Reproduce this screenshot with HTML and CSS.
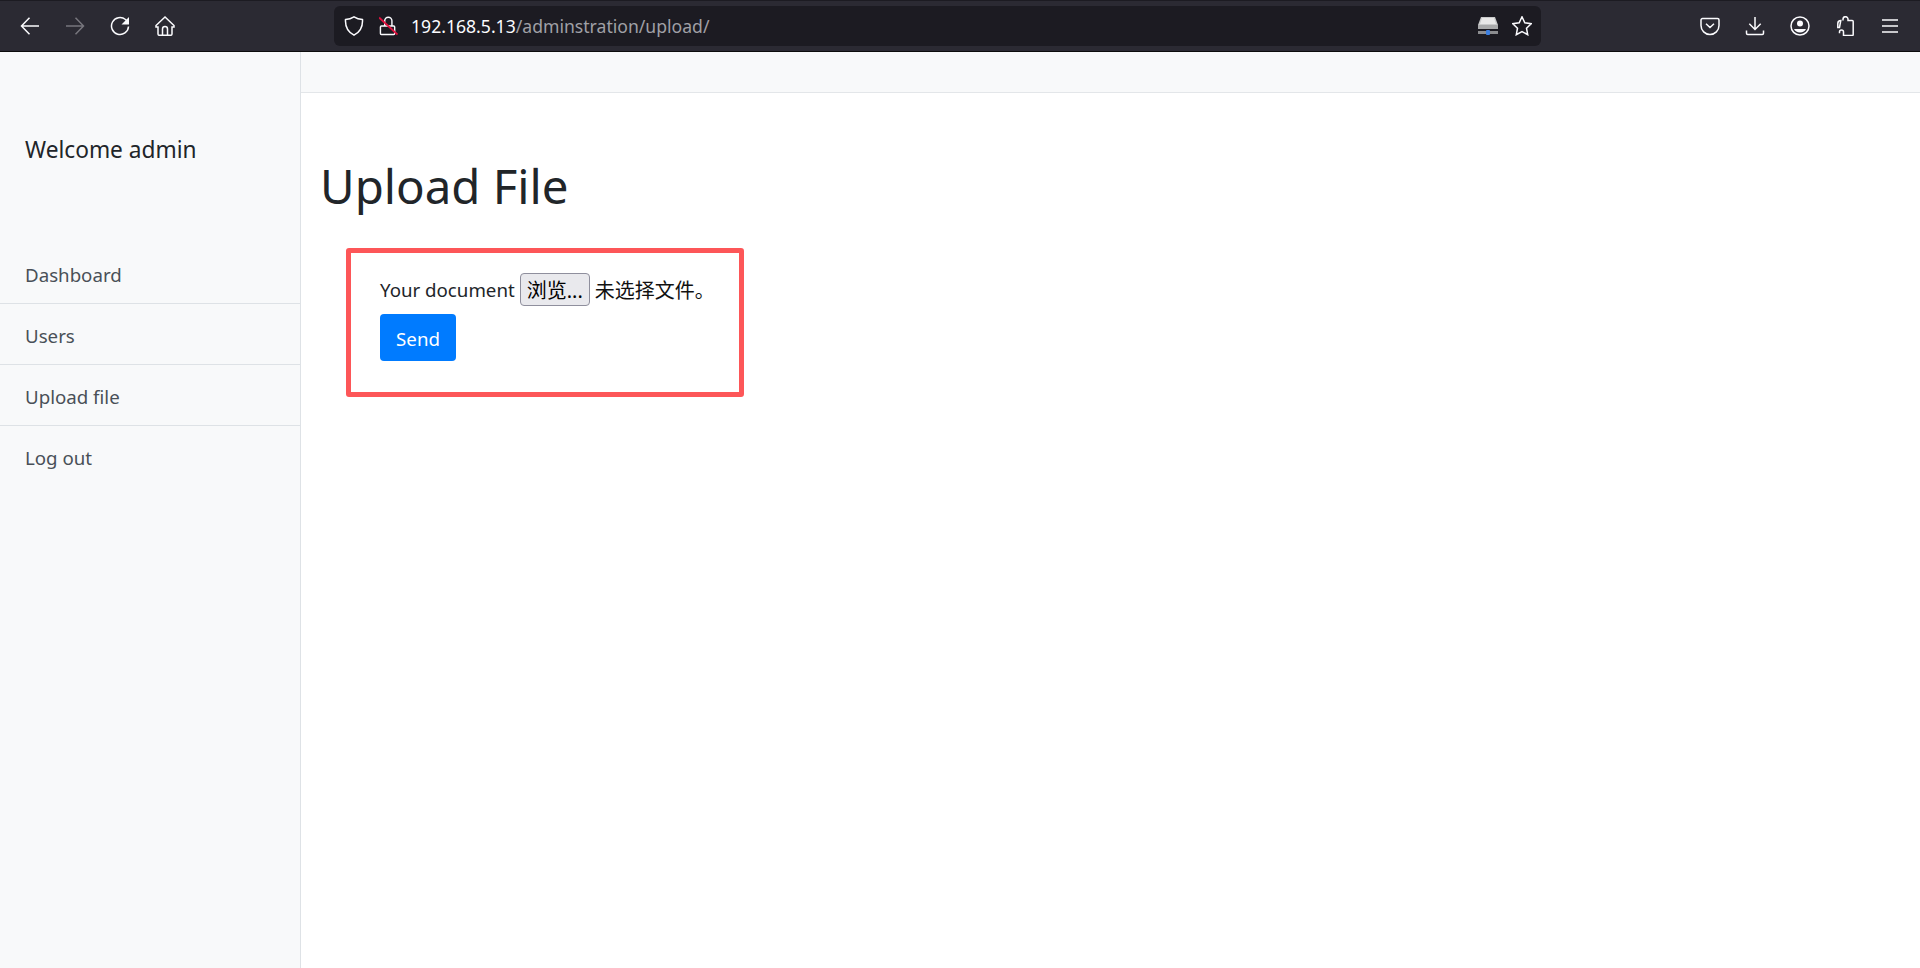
FILE: index.html
```html
<!DOCTYPE html>
<html lang="zh-CN">
<head>
<meta charset="utf-8">
<title>Upload File</title>
<link rel="stylesheet" href="styles.css">
</head>
<body>
<header class="toolbar">
  <div class="tool-group nav-tools">
    <svg class="icon" viewBox="0 0 20 20"><path d="M19 10H1.500M9.500 1.800 1.500 10l8 8.200"/></svg>
    <svg class="icon dim" viewBox="0 0 20 20"><path d="M1 10H18.500M10.500 1.800 18.500 10l-8 8.200"/></svg>
    <svg class="icon" viewBox="0 0 20 20"><path d="M18.500 10.500A8.500 8.500 0 1 1 15.500 3.500l2 2"/><path class="solid" d="M19 1v7.500h-7.500z"/></svg>
    <svg class="icon" viewBox="0 0 20 20"><path d="M10 1 1 9.500v1.500h2v7a1.300 1.300 0 0 0 1.300 1.300h11.400a1.300 1.300 0 0 0 1.300-1.300v-7h2V9.500zM7.500 19v-6a2.500 2.500 0 0 1 5 0v6"/></svg>
  </div>
  <div class="urlbar">
    <svg class="icon shield" viewBox="0 0 20 20"><path d="M10 .8c2.500 1.600 5.300 2.500 8.500 2.800.4 7-2.200 12.200-8.500 15.600C3.700 15.800 1.100 10.600 1.500 3.600 4.700 3.300 7.500 2.400 10 .8z"/></svg>
    <svg class="icon lock" viewBox="0 0 20 20"><path d="M6 9.500V4.500a3.800 3.800 0 0 1 7.600 0v5M2.500 10h13c.8 0 1 .4 1 1v7c0 .7-.4 1-1 1h-13c-.7 0-1-.3-1-1v-7c0-.7.300-1 1-1z"/><path class="slash" d="M0 1l19.500 18"/></svg>
    <span class="url"><span class="host">192.168.5.13</span>/adminstration/upload/</span>
    <svg class="drive" viewBox="0 0 22 20"><path fill="#c9cacb" d="M4 1h14l3 8v4H1V9z"/><path fill="#e8e8e8" d="M5 2h12l2 6H3z"/><rect x="1" y="9" width="20" height="4" fill="#a9aaab"/><rect x="1" y="15" width="20" height="3" fill="#8c8d90"/><rect x="9" y="14" width="4" height="5" rx="1" fill="#3d7fe0"/></svg>
    <svg class="icon star" viewBox="0 0 20 20"><path d="M10 .8l2.800 6 6.400.9-4.700 4.500 1.200 6.500-5.700-3.200-5.700 3.200 1.200-6.500L.8 7.700l6.400-.9z"/></svg>
  </div>
  <div class="tool-group end-tools">
    <svg class="icon" viewBox="0 0 20 20"><path d="M2.500 2.500h15A1.500 1.500 0 0 1 19 4v5.500a9 9 0 0 1-18 0V4a1.500 1.500 0 0 1 1.500-1.500zM6 7.800l4 3.700 4-3.700"/></svg>
    <svg class="icon" viewBox="0 0 20 20"><path d="M10 1V13.500M4.300 7.800 10 13.500l5.700-5.700M1.500 14.500v2.800c0 .8.500 1.200 1.200 1.200h14.600c.7 0 1.200-.4 1.200-1.200v-2.800"/></svg>
    <svg class="icon" viewBox="0 0 20 20"><circle cx="10" cy="10" r="9"/><circle class="solid" cx="10" cy="7.500" r="3"/><path class="solid" d="M4 13h12c-1 2.300-3.200 3.500-6 3.500S5 15.300 4 13z"/></svg>
    <svg class="icon" viewBox="0 0 20 20"><path d="M8 4.500V3.200a2.500 2.500 0 0 1 5 0v1.300h4.200c.6 0 1 .4 1 1v13c0 .5-.4 1-1 1H8.500v-3.500a2 2 0 0 0-4 0v1.300M4.500 11.500H2.800V7.500c0-1.800 1-3 3-3z"/></svg>
    <svg class="icon" viewBox="0 0 20 20"><path d="M2 4h16M2 10h16M2 16h16"/></svg>
  </div>
</header>
<div class="app">
  <aside class="sidebar">
    <h3 class="welcome">Welcome admin</h3>
    <nav class="menu">
      <a class="menu-item" href="#">Dashboard</a>
      <a class="menu-item" href="#">Users</a>
      <a class="menu-item" href="#">Upload file</a>
      <a class="menu-item" href="#">Log out</a>
    </nav>
  </aside>
  <main class="content">
    <div class="topbar"></div>
    <h1 class="title">Upload File</h1>
    <form class="upload-form">
      <div class="file-row">
        <span>Your document</span>
        <button type="button" class="browse">浏览...</button>
        <span class="cjk">未选择文件。</span>
      </div>
      <button type="button" class="send">Send</button>
    </form>
  </main>
</div>
</body>
</html>
```
FILE: styles.css
```css
* { box-sizing: border-box; }
html, body { margin: 0; height: 968px; overflow: hidden; }
body {
  font-family: "Noto Sans", "Noto Sans CJK SC", sans-serif;
  font-size: 19px;
  color: #212529;
  background: #fff;
  display: flex;
  flex-direction: column;
}
.toolbar {
  height: 52px;
  flex: none;
  display: flex;
  align-items: center;
  background: #2b2a33;
  border-top: 1px solid #1c1b22;
  border-bottom: 1px solid #0c0c0d;
}
.icon {
  width: 20px;
  height: 20px;
  fill: none;
  stroke: #fbfbfe;
  stroke-width: 1.5;
  flex: none;
}
.icon .solid { fill: #fbfbfe; stroke: none; }
.icon.dim { stroke: #77767d; }
.tool-group { display: flex; align-items: center; gap: 25px; }
.nav-tools { padding-left: 20px; width: 334px; }
.urlbar {
  width: 1207px;
  height: 40px;
  display: flex;
  align-items: center;
  background: #1c1b22;
  border-radius: 6px;
  padding: 0 9px 0 10px;
}
.shield { margin-right: 15px; }
.lock { width: 19px; margin-right: 13px; }
.lock .slash { stroke: #e0123f; stroke-width: 2; }
.url {
  font-size: 17.6px;
  color: #a0a0a6;
  flex: 1;
  white-space: nowrap;
}
.host { color: #fbfbfe; }
.drive { width: 22px; height: 20px; flex: none; margin-right: 13px; }
.end-tools { margin-left: 159px; }
.app { flex: 1; display: flex; min-height: 0; }
.sidebar {
  width: 301px;
  flex: none;
  background: #f8f9fa;
  border-right: 1px solid #dee2e6;
}
.welcome {
  margin: 0;
  padding: 83px 25px 0;
  font-size: 22.7px;
  font-weight: 400;
  line-height: 29px;
  height: 191px;
}
.menu { display: flex; flex-direction: column; }
.menu-item {
  height: 61px;
  padding: 2px 25px 0;
  display: flex;
  align-items: center;
  color: #495057;
  text-decoration: none;
  border-bottom: 1px solid #dee2e6;
  font-size: 18.7px;
}
.menu-item:last-child { border-bottom: 0; }
.content { flex: 1; min-width: 0; }
.topbar {
  height: 41px;
  background: #f8f9fa;
  border-bottom: 1px solid #e3e6e9;
}
.title {
  margin: 0;
  padding: 64px 0 0 19px;
  font-size: 47.4px;
  font-weight: 400;
  line-height: 58px;
  height: 155px;
}
.upload-form {
  margin-left: 45px;
  width: 398px;
  height: 149px;
  border: 5px solid #fd5658;
  border-radius: 3px;
  padding: 20px 0 20px 29px;
}
.file-row {
  display: flex;
  align-items: center;
  gap: 5px;
  height: 33px;
  white-space: nowrap;
  font-size: 18.7px;
}
.browse {
  flex: none;
  width: 70px;
  height: 33px;
  padding: 0;
  background: #e9e9ed;
  border: 1px solid #8f8f9d;
  border-radius: 4px;
  color: #000;
  font: inherit;
  font-size: 20px;
}
.cjk { font-size: 20px; color: #111; }
.send {
  display: block;
  margin-top: 8px;
  width: 76px;
  height: 47px;
  padding: 2px 0 0;
  background: #007bff;
  border: 0;
  border-radius: 4px;
  color: #fff;
  font: inherit;
  font-size: 18.7px;
}
```
